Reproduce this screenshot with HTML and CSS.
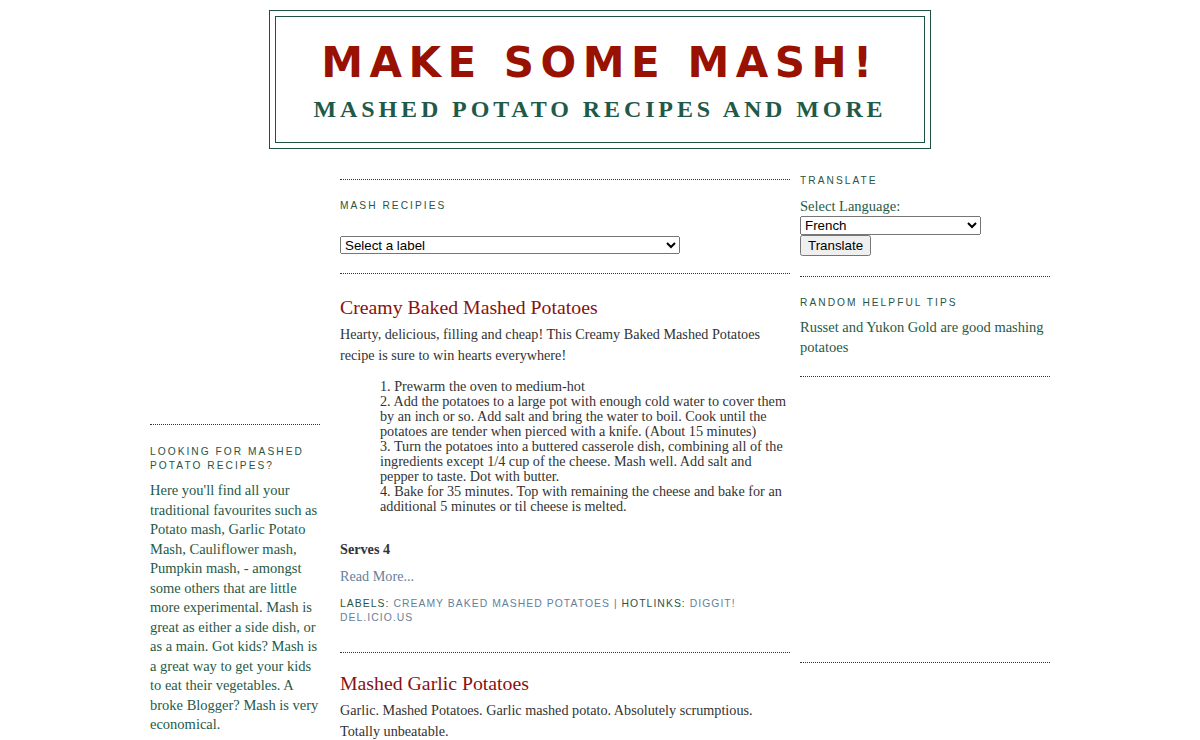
FILE: index.html
```html
<!DOCTYPE html>
<html lang="en">
<head>
<meta charset="utf-8">
<title>Make Some Mash!</title>
<link rel="stylesheet" href="styles.css">
</head>
<body>
<header class="header-wrap">
  <div class="header">
    <h1 class="blog-title">Make Some Mash!</h1>
    <p class="blog-desc">Mashed Potato Recipes and More</p>
  </div>
</header>

<div class="outer">
  <aside class="sidebar left">
    <div class="widget about">
      <h2>Looking for Mashed Potato Recipes?</h2>
      <p>Here you'll find all your traditional favourites such as Potato mash, Garlic Potato Mash, Cauliflower mash, Pumpkin mash, - amongst some others that are little more experimental. Mash is great as either a side dish, or as a main. Got kids? Mash is a great way to get your kids to eat their vegetables. A broke Blogger? Mash is very economical.</p>
    </div>
  </aside>

  <main class="main">
    <div class="widget labels">
      <h2>Mash Recipies</h2>
      <select class="label-select">
        <option>Select a label</option>
      </select>
    </div>

    <article class="post first">
      <h3 class="post-title">Creamy Baked Mashed Potatoes</h3>
      <div class="post-body">
        <p>Hearty, delicious, filling and cheap! This Creamy Baked Mashed Potatoes recipe is sure to win hearts everywhere!</p>
        <blockquote class="steps">
          1. Prewarm the oven to medium-hot<br>
          2. Add the potatoes to a large pot with enough cold water to cover them by an inch or so. Add salt and bring the water to boil. Cook until the potatoes are tender when pierced with a knife. (About 15 minutes)<br>
          3. Turn the potatoes into a buttered casserole dish, combining all of the ingredients except 1/4 cup of the cheese. Mash well. Add salt and pepper to taste. Dot with butter.<br>
          4. Bake for 35 minutes. Top with remaining the cheese and bake for an additional 5 minutes or til cheese is melted.
        </blockquote>
        <p class="serves"><strong>Serves 4</strong></p>
        <p class="more"><a href="#">Read More...</a></p>
      </div>
      <div class="post-footer">
        Labels: <a href="#">Creamy Baked Mashed Potatoes</a> <span class="sep">|</span> Hotlinks: <a href="#">Diggit!</a> <a href="#">Del.icio.us</a>
      </div>
    </article>

    <article class="post">
      <h3 class="post-title">Mashed Garlic Potatoes</h3>
      <div class="post-body">
        <p>Garlic. Mashed Potatoes. Garlic mashed potato. Absolutely scrumptious. Totally unbeatable.</p>
      </div>
    </article>
  </main>

  <aside class="sidebar right">
    <div class="widget translate">
      <h2>Translate</h2>
      <div class="lang-label">Select Language:</div>
      <select class="lang-select">
        <option>French</option>
      </select>
      <button class="translate-btn" type="button">Translate</button>
    </div>
    <div class="widget tips">
      <h2>Random Helpful Tips</h2>
      <p>Russet and Yukon Gold are good mashing potatoes</p>
    </div>
    <div class="widget blank"></div>
  </aside>
</div>
</body>
</html>
```

FILE: styles.css
```css
* { box-sizing: border-box; }

body {
  margin: 0;
  background: #fff;
  color: #333;
  font-family: "Liberation Serif", "Times New Roman", serif;
  font-size: 14.5px;
}

a { color: #667f9a; text-decoration: none; }

/* ---------- header ---------- */
.header-wrap {
  width: 662px;
  margin: 10px auto 0;
  border: 1px solid #1f5142;
}
.header {
  margin: 5px;
  border: 1px solid #1f5142;
  text-align: center;
  padding: 21px 10px 19px;
}
.blog-title {
  margin: 0;
  font-family: "DejaVu Sans", Verdana, sans-serif;
  font-weight: bold;
  font-size: 42px;
  line-height: 50px;
  letter-spacing: 6.5px;
  text-transform: uppercase;
  color: #991100;
}
.blog-desc {
  margin: 7px 0 0;
  font-family: "Liberation Serif", "Times New Roman", serif;
  font-weight: bold;
  font-size: 24px;
  line-height: 28px;
  letter-spacing: 3.9px;
  text-transform: uppercase;
  color: #1f5a48;
}

/* ---------- columns ---------- */
.outer {
  width: 900px;
  margin: 20px auto 0;
  display: flex;
  align-items: flex-start;
}
.left { width: 170px; margin-right: 20px; }
.main { width: 450px; margin-right: 10px; }
.right { width: 250px; }

h2 {
  margin: 0;
  font-family: "Liberation Sans", Arial, sans-serif;
  font-weight: normal;
  font-size: 10.2px;
  line-height: 14px;
  letter-spacing: 0.2em;
  text-transform: uppercase;
  color: #2a5446;
}

.widget { border-bottom: 1px dotted #333; }

.sidebar { color: #1f5a48; line-height: 19.5px; }
.sidebar p { margin: 0; }

/* left */
.about {
  margin-top: 255px;
  border-top: 1px dotted #333;
  border-bottom: none;
  padding-top: 20px;
}
.about h2 { margin-bottom: 8px; }

/* right */
.translate { margin-top: 5px; padding-bottom: 20px; }
.lang-label { line-height: 18px; margin-top: 9px; }
.lang-select {
  display: block;
  margin-top: 1px;
  width: 181px;
  height: 19px;
  font-family: "Liberation Sans", Arial, sans-serif;
  font-size: 13.33px;
}
.translate-btn {
  display: block;
  height: 21px;
  padding: 0 6px;
  font-family: "Liberation Sans", Arial, sans-serif;
  font-size: 13.33px;
}
.tips { padding: 19px 0 19px; }
.tips h2 { margin-bottom: 8px; }
.blank { height: 286px; }

/* main */
.labels {
  margin-top: 10px;
  border-top: 1px dotted #333;
  padding: 19px 0 19px;
}
.labels h2 { margin-bottom: 23px; }
.label-select {
  display: block;
  width: 340px;
  height: 18px;
  font-family: "Liberation Sans", Arial, sans-serif;
  font-size: 13.33px;
}

.post {
  border-bottom: 1px dotted #333;
  padding-bottom: 27px;
}
.post:last-child { border-bottom: none; }
.post-title {
  margin: 17px 0 4px;
  font-weight: normal;
  font-size: 19.8px;
  line-height: 26px;
  color: #881111;
}
.post.first .post-title { margin-top: 20px; }
.post-body { line-height: 21px; font-size: 14.2px; }
.post-body p { margin: 0; }
.steps {
  margin: 13px 0 0 40px;
  line-height: 15px;
  font-size: 14.2px;
}
.serves { margin-top: 25px !important; }
.more { margin-top: 6px !important; }

.post-footer {
  margin-top: 10px;
  font-family: "Liberation Sans", Arial, sans-serif;
  font-size: 10.4px;
  line-height: 14px;
  letter-spacing: 0.1em;
  text-transform: uppercase;
  color: #2a5446;
}
.post-footer .sep { color: #777; }
```
